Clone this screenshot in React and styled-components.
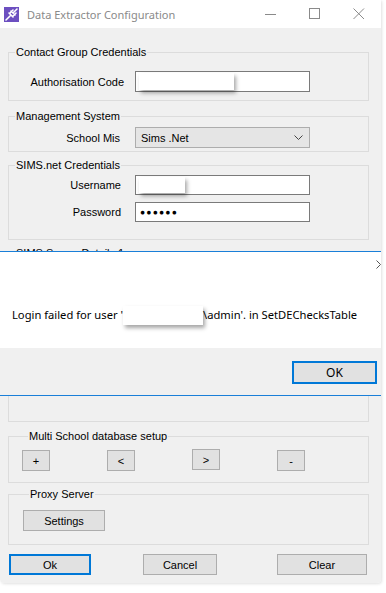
import React from 'react';
import styled, { createGlobalStyle, css } from 'styled-components';

const GlobalStyle = createGlobalStyle`
  html, body {
    margin: 0;
    padding: 0;
    background: #ffffff;
  }
  body {
    font-family: "Liberation Sans", Arial, sans-serif;
    font-size: 11px;
    color: #000;
  }
`;

const Page = styled.div`
  width: 386px;
  height: 593px;
  overflow: hidden;
  background: #ffffff;
`;

const Window = styled.div`
  width: 381px;
  display: flex;
  flex-direction: column;
  border-radius: 0 0 4px 4px;
  box-shadow: 1px 1px 3px rgba(0, 0, 0, 0.12);
`;

const TitleBar = styled.div`
  height: 28px;
  display: flex;
  align-items: center;
  background: #ffffff;
  padding-left: 4px;
`;

const Title = styled.span`
  margin-left: 8px;
  font-family: "Noto Sans", "Open Sans", sans-serif;
  font-size: 11px;
  color: #8a8a8a;
  flex: 1;
`;

const Controls = styled.div`
  display: flex;
  align-items: center;
  height: 100%;
`;

const ControlBox = styled.div`
  width: 44px;
  height: 100%;
  display: flex;
  align-items: center;
  justify-content: center;
`;

const Upper = styled.div`
  height: 223px;
  overflow: hidden;
  background: #f0f0f0;
  padding-left: 8px;
  display: flex;
  flex-direction: column;
`;

const Group = styled.fieldset`
  width: 361px;
  box-sizing: border-box;
  margin: ${({ $mt }) => $mt}px 0 0 0;
  padding: ${({ $pt }) => $pt}px 0 ${({ $pb }) => $pb}px ${({ $pl }) => $pl || 0}px;
  border: 1px solid #dcdcdc;
  min-width: 0;
  flex-shrink: 0;
`;

const Legend = styled.legend`
  margin-left: 6px;
  padding: 0 1px;
  font-size: 11px;
  line-height: 13px;
  color: #000;
`;

const FieldRow = styled.div`
  display: grid;
  grid-template-columns: 126px 175px;
  align-items: center;
  height: ${({ $h }) => $h || 20}px;
  & + & {
    margin-top: 7px;
  }
`;

const Label = styled.label`
  text-align: right;
  padding-right: ${({ $pr }) => $pr}px;
  white-space: nowrap;
`;

const TextBox = styled.div`
  height: 100%;
  box-sizing: border-box;
  border: 1px solid #7a7a7a;
  background: #ffffff;
  display: flex;
  align-items: center;
  padding-left: 3px;
`;

const Redacted = styled.span`
  display: inline-block;
  width: ${({ $w }) => $w}px;
  height: ${({ $h }) => $h}px;
  background: #ffffff;
  box-shadow: 2px 3px 4px rgba(0, 0, 0, 0.35);
  vertical-align: middle;
`;

const Dots = styled.span`
  font-size: 8.5px;
  letter-spacing: 1.2px;
  color: #000;
  margin-left: 1px;
`;

const Select = styled.div`
  height: 100%;
  box-sizing: border-box;
  border: 1px solid #adadad;
  background: #e5e5e5;
  display: flex;
  align-items: center;
  justify-content: space-between;
  padding: 0 6px 0 5px;
`;

const MessageBox = styled.div`
  border-top: 1px solid #1a7fd8;
  border-bottom: 1px solid #1a7fd8;
  display: flex;
  flex-direction: column;
`;

const MessageBody = styled.div`
  height: 96px;
  background: #ffffff;
  display: flex;
  flex-direction: column;
`;

const Chevron = styled.div`
  align-self: flex-end;
  margin-top: 7px;
  height: 9px;
`;

const MessageText = styled.div`
  margin: 38px 0 0 12px;
  font-family: "Noto Sans", "Open Sans", sans-serif;
  font-size: 11.2px;
  line-height: 16px;
  white-space: nowrap;
  color: #000;
`;

const MessageFooter = styled.div`
  height: 47px;
  background: #f0f0f0;
  display: flex;
  justify-content: flex-end;
  align-items: flex-start;
  padding: 13px 4px 0 0;
  box-sizing: border-box;
`;

const Button = styled.button`
  width: ${({ $w }) => $w}px;
  height: ${({ $h }) => $h || 21}px;
  margin: ${({ $mt }) => $mt || 0}px 0 0 ${({ $ml }) => $ml || 0}px;
  box-sizing: border-box;
  border: 1px solid #adadad;
  background: #e1e1e1;
  font-family: "Liberation Sans", Arial, sans-serif;
  font-size: 11px;
  color: #000;
  padding: 0;
  flex-shrink: 0;
  ${({ $default }) =>
    $default &&
    css`
      border: 2px solid #0078d7;
    `}
`;

const MsgButton = styled(Button)`
  font-family: "Noto Sans", "Open Sans", sans-serif;
  font-size: 12px;
`;

const Lower = styled.div`
  background: #f0f0f0;
  padding: 0 0 8px 8px;
  display: flex;
  flex-direction: column;
  border-radius: 0 0 4px 4px;
`;

const GroupTail = styled.div`
  width: 361px;
  height: 26px;
  box-sizing: border-box;
  border: 1px solid #dcdcdc;
  border-top: none;
`;

const ButtonRow = styled.div`
  display: flex;
  align-items: flex-start;
  gap: ${({ $gap }) => $gap || 0}px;
`;

const AppIcon = () => (
  <svg width="15" height="15" viewBox="0 0 15 15">
    <rect width="15" height="15" fill="#6c4fc0" />
    <path d="M2 13 L6 9 M5 6 L9 10 M7 4 L11 8 M9 6 L13 2 M6 6 L9 3 M9 9 L12 6" stroke="#ffffff" strokeWidth="1.6" strokeLinecap="round" fill="none" />
  </svg>
);

export default function App() {
  return (
    <Page>
      <GlobalStyle />
      <Window>
        <TitleBar>
          <AppIcon />
          <Title>Data Extractor Configuration</Title>
          <Controls>
            <ControlBox>
              <svg width="12" height="12" viewBox="0 0 12 12">
                <path d="M0 6.5 H11" stroke="#8a8a8a" strokeWidth="1" />
              </svg>
            </ControlBox>
            <ControlBox>
              <svg width="12" height="12" viewBox="0 0 12 12">
                <rect x="0.5" y="0.5" width="10" height="10" stroke="#8a8a8a" fill="none" />
              </svg>
            </ControlBox>
            <ControlBox>
              <svg width="12" height="12" viewBox="0 0 12 12">
                <path d="M0.5 0.5 L11 11 M11 0.5 L0.5 11" stroke="#8a8a8a" strokeWidth="1" />
              </svg>
            </ControlBox>
          </Controls>
        </TitleBar>

        <Upper>
          <Group $mt={18} $pt={12} $pb={8}>
            <Legend>Contact Group Credentials</Legend>
            <FieldRow $h={21}>
              <Label $pr={11}>Authorisation Code</Label>
              <TextBox>
                <Redacted $w={95} $h={17} />
              </TextBox>
            </FieldRow>
          </Group>

          <Group $mt={9} $pt={4} $pb={3}>
            <Legend>Management System</Legend>
            <FieldRow $h={21}>
              <Label $pr={15}>School Mis</Label>
              <Select>
                <span>Sims .Net</span>
                <svg width="9" height="6" viewBox="0 0 9 6">
                  <path d="M0.5 0.5 L4.5 4.5 L8.5 0.5" stroke="#444" fill="none" />
                </svg>
              </Select>
            </FieldRow>
          </Group>

          <Group $mt={7} $pt={3} $pb={17}>
            <Legend>SIMS.net Credentials</Legend>
            <FieldRow>
              <Label $pr={14}>Username</Label>
              <TextBox>
                <Redacted $w={46} $h={16} />
              </TextBox>
            </FieldRow>
            <FieldRow>
              <Label $pr={14}>Password</Label>
              <TextBox>
                <Dots>●●●●●●</Dots>
              </TextBox>
            </FieldRow>
          </Group>

          <Group $mt={7} $pt={10} $pb={10}>
            <Legend>SIMS Server Details 1</Legend>
          </Group>
        </Upper>

        <MessageBox>
          <MessageBody>
            <Chevron>
              <svg width="5" height="9" viewBox="0 0 5 9">
                <path d="M0.5 0.5 L4.5 4.5 L0.5 8.5" stroke="#555" fill="none" />
              </svg>
            </Chevron>
            <MessageText>
              Login failed for user '<Redacted $w={80} $h={19} />\admin'. in SetDEChecksTable
            </MessageText>
          </MessageBody>
          <MessageFooter>
            <MsgButton $w={85} $h={23} $default>OK</MsgButton>
          </MessageFooter>
        </MessageBox>

        <Lower>
          <GroupTail />

          <Group $mt={8} $pt={7} $pb={11} $pl={13}>
            <Legend>Multi School database setup</Legend>
            <ButtonRow $gap={57}>
              <Button $w={28}>+</Button>
              <Button $w={28}>&lt;</Button>
              <Button $w={28} $mt={-1}>&gt;</Button>
              <Button $w={28}>-</Button>
            </ButtonRow>
          </Group>

          <Group $mt={5} $pt={9} $pb={13} $pl={14}>
            <Legend>Proxy Server</Legend>
            <Button $w={82}>Settings</Button>
          </Group>

          <ButtonRow>
            <Button $w={82} $mt={9} $ml={1} $default>Ok</Button>
            <Button $w={74} $mt={9} $ml={52}>Cancel</Button>
            <Button $w={90} $mt={9} $ml={60}>Clear</Button>
          </ButtonRow>
        </Lower>
      </Window>
    </Page>
  );
}
